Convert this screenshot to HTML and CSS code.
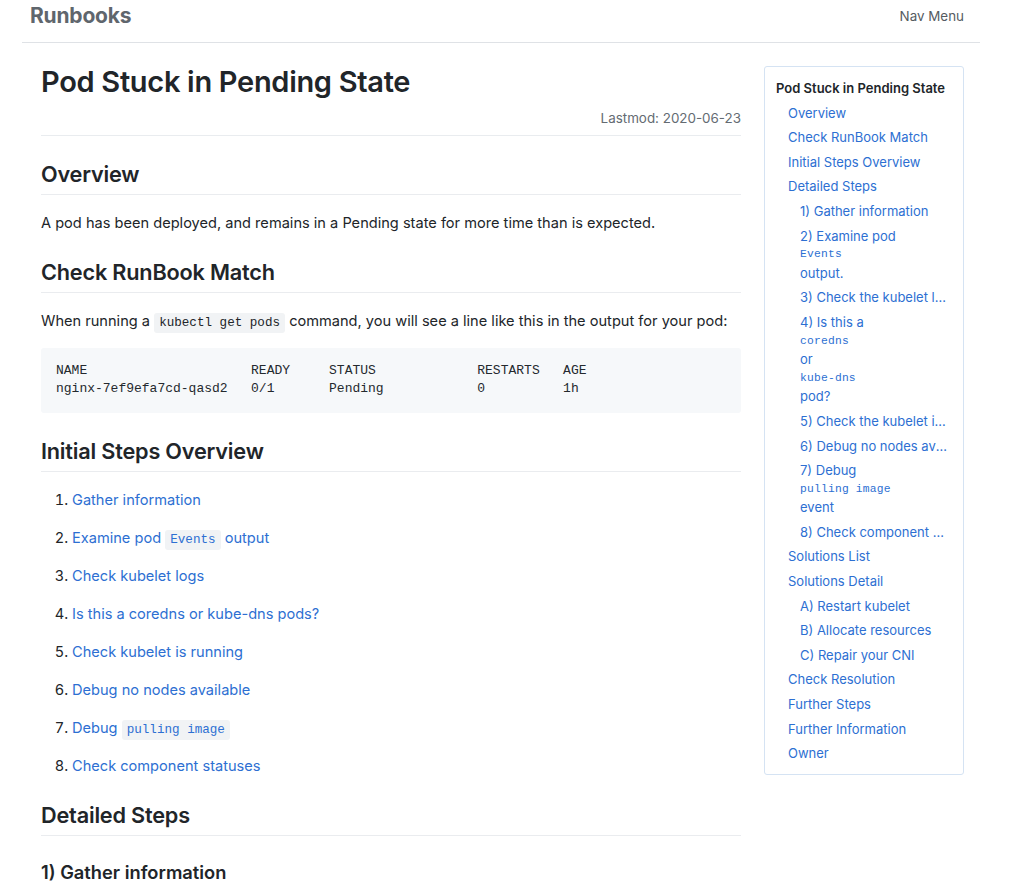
FILE: index.html
```html
<!DOCTYPE html>
<html lang="en">
<head>
<meta charset="utf-8">
<title>Pod Stuck in Pending State - Runbooks</title>
<link rel="stylesheet" href="styles.css">
</head>
<body>
<header class="navbar">
  <a class="brand" href="#">Runbooks</a>
  <a class="navmenu" href="#">Nav Menu</a>
</header>
<div class="layout">
  <main class="content">
    <h1 class="title">Pod Stuck in Pending State</h1>
    <div class="lastmod">Lastmod: 2020-06-23</div>
    <hr class="rule">
    <h2>Overview</h2>
    <p>A pod has been deployed, and remains in a Pending state for more time than is expected.</p>
    <h2>Check RunBook Match</h2>
    <p>When running a <code>kubectl get pods</code> command, you will see a line like this in the output for your pod:</p>
<pre>NAME                     READY     STATUS             RESTARTS   AGE
nginx-7ef9efa7cd-qasd2   0/1       Pending            0          1h</pre>
    <h2>Initial Steps Overview</h2>
    <ol class="steps">
      <li><a href="#">Gather information</a></li>
      <li><a href="#">Examine pod <code>Events</code> output</a></li>
      <li><a href="#">Check kubelet logs</a></li>
      <li><a href="#">Is this a coredns or kube-dns pods?</a></li>
      <li><a href="#">Check kubelet is running</a></li>
      <li><a href="#">Debug no nodes available</a></li>
      <li><a href="#">Debug <code>pulling image</code></a></li>
      <li><a href="#">Check component statuses</a></li>
    </ol>
    <h2>Detailed Steps</h2>
    <h3>1) Gather information</h3>
  </main>
  <aside class="toc">
    <div class="toc-title">Pod Stuck in Pending State</div>
    <ul class="toc-list">
      <li><a href="#">Overview</a></li>
      <li><a href="#">Check RunBook Match</a></li>
      <li><a href="#">Initial Steps Overview</a></li>
      <li><a href="#">Detailed Steps</a>
        <ul class="toc-sub">
          <li><a href="#">1) Gather information</a></li>
          <li><a href="#">2) Examine pod <code>Events</code> output.</a></li>
          <li><a href="#">3) Check the kubelet logs</a></li>
          <li><a href="#">4) Is this a <code>coredns</code> or <code>kube-dns</code> pod?</a></li>
          <li><a href="#">5) Check the kubelet is running</a></li>
          <li><a href="#">6) Debug no nodes available</a></li>
          <li><a href="#">7) Debug <code>pulling image</code> event</a></li>
          <li><a href="#">8) Check component statuses</a></li>
        </ul>
      </li>
      <li><a href="#">Solutions List</a></li>
      <li><a href="#">Solutions Detail</a>
        <ul class="toc-sub">
          <li><a href="#">A) Restart kubelet</a></li>
          <li><a href="#">B) Allocate resources</a></li>
          <li><a href="#">C) Repair your CNI</a></li>
        </ul>
      </li>
      <li><a href="#">Check Resolution</a></li>
      <li><a href="#">Further Steps</a></li>
      <li><a href="#">Further Information</a></li>
      <li><a href="#">Owner</a></li>
    </ul>
  </aside>
</div>
</body>
</html>
```

FILE: styles.css
```css
* { box-sizing: border-box; }
html, body { margin: 0; padding: 0; background: #fff; }
body {
  font-family: "Inter", "Liberation Sans", sans-serif;
  font-size: 14.6px;
  line-height: 22px;
  color: #212529;
}
a { color: #2d6fd2; text-decoration: none; }
code, pre {
  font-family: "Liberation Mono", "DejaVu Sans Mono", monospace;
}

.navbar {
  margin-left: 22px;
  width: 958px;
  height: 43px;
  border-bottom: 1px solid #dfe2e6;
  display: flex;
  align-items: center;
  justify-content: space-between;
  padding: 0 16px 10px 8px;
}
.brand { color: #5f666d; font-size: 21px; font-weight: 700; letter-spacing: -0.2px; }
.navmenu { color: #555b61; font-size: 13.4px; }

.layout {
  display: flex;
  align-items: flex-start;
  gap: 23px;
  margin-left: 41px;
  padding-top: 21px;
}
.content { width: 700px; flex: none; }
.title {
  font-size: 29px;
  line-height: 36px;
  font-weight: 600;
  margin: 0;
  letter-spacing: -0.3px;
}
.lastmod {
  text-align: right;
  font-size: 13.4px;
  line-height: 21px;
  color: #646b72;
  margin-top: 8px;
}
.rule { border: 0; border-top: 1px solid #e9ecef; margin: 6px 0 0; }

h2 {
  font-size: 21.7px;
  line-height: 28px;
  font-weight: 600;
  margin: 24px 0 17px;
  padding-bottom: 6px;
  border-bottom: 1px solid #eaecef;
  letter-spacing: -0.2px;
}
h3 {
  font-size: 18.3px;
  line-height: 24px;
  font-weight: 600;
  margin: 24px 0 0;
}
p { margin: 0 0 16px; }
p code, li code {
  font-size: 12.6px;
  line-height: 1;
  background: #f1f3f5;
  padding: 3px 5px;
  border-radius: 3px;
}
pre {
  margin: 0 0 16px;
  background: #f6f8fa;
  border-radius: 3px;
  padding: 14px 15px 15px;
  font-size: 13px;
  line-height: 18px;
  color: #24292e;
}

.steps { margin: 0 0 16px; padding-left: 31px; }
.steps li { margin-bottom: 16px; }
.steps li:last-child { margin-bottom: 0; }
.steps li code { color: #2d6fd2; }

.toc {
  width: 200px;
  flex: none;
  margin-top: 2px;
  border: 1px solid #d5e3f3;
  border-radius: 3px;
  padding: 9px 15px 8px 11px;
  font-size: 13px;
  line-height: 18.6px;
}
.toc-title { font-weight: 600; padding: 3px 0; }
.toc ul { list-style: none; margin: 0; padding: 0 0 0 12px; }
.toc li a {
  display: block;
  padding: 3px 0;
  white-space: nowrap;
  overflow: hidden;
  text-overflow: ellipsis;
}
.toc li code {
  display: block;
  font-size: 11.3px;
  line-height: 18.6px;
  background: none;
  padding: 0;
  letter-spacing: 0.2px;
}
```
